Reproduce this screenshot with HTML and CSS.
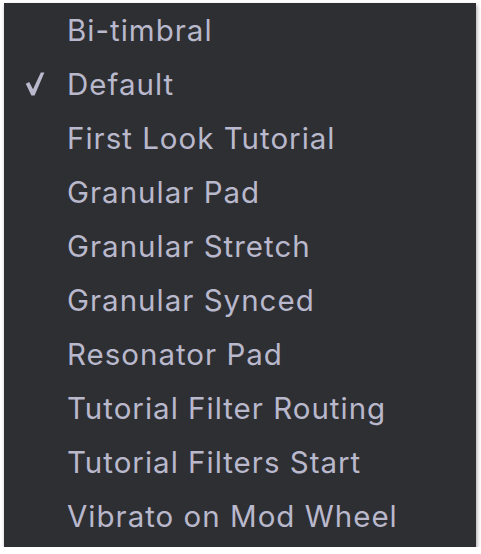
FILE: index.html
```html
<!DOCTYPE html>
<html>
<head>
<meta charset="utf-8">
<link rel="stylesheet" href="styles.css">
</head>
<body>
<ul class="menu">
  <li class="item"><span class="check"></span><span class="label">Bi-timbral</span></li>
  <li class="item selected"><span class="check"><svg width="20" height="24" viewBox="0 0 20 24"><path d="M0.8 11.8 L4.2 10 L8 17.2 L15.8 0.6 L19.4 0.6 L9.6 23.4 L6.4 23.4 Z" fill="#b9b8cc"/></svg></span><span class="label">Default</span></li>
  <li class="item"><span class="check"></span><span class="label">First Look Tutorial</span></li>
  <li class="item"><span class="check"></span><span class="label">Granular Pad</span></li>
  <li class="item"><span class="check"></span><span class="label">Granular Stretch</span></li>
  <li class="item"><span class="check"></span><span class="label">Granular Synced</span></li>
  <li class="item"><span class="check"></span><span class="label">Resonator Pad</span></li>
  <li class="item"><span class="check"></span><span class="label">Tutorial Filter Routing</span></li>
  <li class="item"><span class="check"></span><span class="label">Tutorial Filters Start</span></li>
  <li class="item"><span class="check"></span><span class="label">Vibrato on Mod Wheel</span></li>
</ul>
</body>
</html>
```
FILE: styles.css
```css
html, body {
  margin: 0;
  padding: 0;
  background: #ffffff;
}
body {
  padding: 3px 0 0 4px;
}
.menu {
  list-style: none;
  margin: 0;
  padding: 0 0 4px 0;
  width: 472px;
  box-sizing: border-box;
  background: #2e2f33;
  box-shadow: 1px 2px 4px rgba(0,0,0,0.35);
}
.item {
  display: flex;
  align-items: center;
  height: 54px;
  font-family: "Inter", "Liberation Sans", sans-serif;
  font-size: 29.5px;
  letter-spacing: 1px;
  color: #b9b8cc;
}
.check {
  width: 63px;
  display: flex;
  justify-content: flex-end;
  box-sizing: border-box;
}
.check svg {
  display: block;
  margin-right: 22px;
}
.label {
  white-space: nowrap;
}
```
